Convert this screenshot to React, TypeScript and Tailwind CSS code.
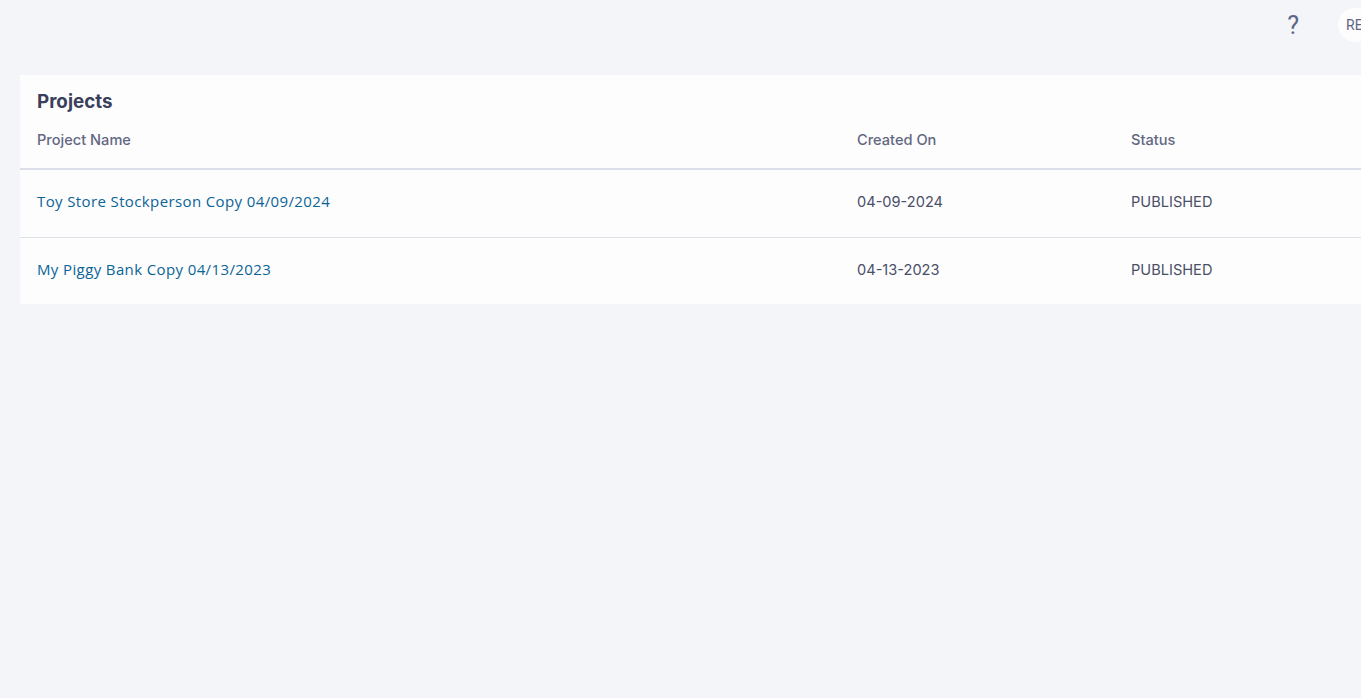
const rows = [
  { name: "Toy Store Stockperson Copy 04/09/2024", created: "04-09-2024", status: "PUBLISHED" },
  { name: "My Piggy Bank Copy 04/13/2023", created: "04-13-2023", status: "PUBLISHED" },
];

export default function App() {
  return (
    <div className="h-[698px] w-[1361px] overflow-hidden bg-[#f3f5f9] font-['Inter',sans-serif]">
      {/* top bar, avatar runs off the right edge */}
      <div className="flex h-[75px] w-[1400px] items-start justify-end pt-2">
        <span className="mt-[1px] mr-[39px] text-[25px] leading-[34px] text-[#5c6585] font-['Roboto',sans-serif]">?</span>
        <div className="mr-[28px] flex h-[34px] w-[34px] items-center justify-start rounded-full bg-[#fdfdfd] pl-[8px] text-[14px] text-[#5c6585] font-['Roboto',sans-serif]">
          RE
        </div>
      </div>

      <div className="ml-5 w-[1400px] bg-[#fdfdfe]">
        <h1 className="pl-[17px] pt-[14px] text-[18.8px] leading-[26px] font-bold text-[#3a3f5c]">Projects</h1>
        <div className="grid h-[55px] grid-cols-[820px_274px_1fr] items-start border-b-2 border-[#dcdfea] pl-[17px] pt-[14px] text-[14.6px] leading-[22px] font-medium text-[#636882]">
          <div>Project Name</div>
          <div>Created On</div>
          <div>Status</div>
        </div>
        {rows.map((row, i) => (
          <div
            key={row.name}
            className={`grid grid-cols-[820px_274px_1fr] items-center pl-[17px] text-[14.6px] leading-[22px] text-[#4a4f68] ${
              i === 0 ? "h-[68px] border-b border-[#dfe1e8] pb-[4px]" : "h-[66px] pb-[3px]"
            }`}
          >
            <a className="pb-[2px] font-['Open_Sans',sans-serif] text-[15px] leading-[20px] tracking-[0.38px] text-[#0b6496]">{row.name}</a>
            <div>{row.created}</div>
            <div>{row.status}</div>
          </div>
        ))}
      </div>
    </div>
  );
}
